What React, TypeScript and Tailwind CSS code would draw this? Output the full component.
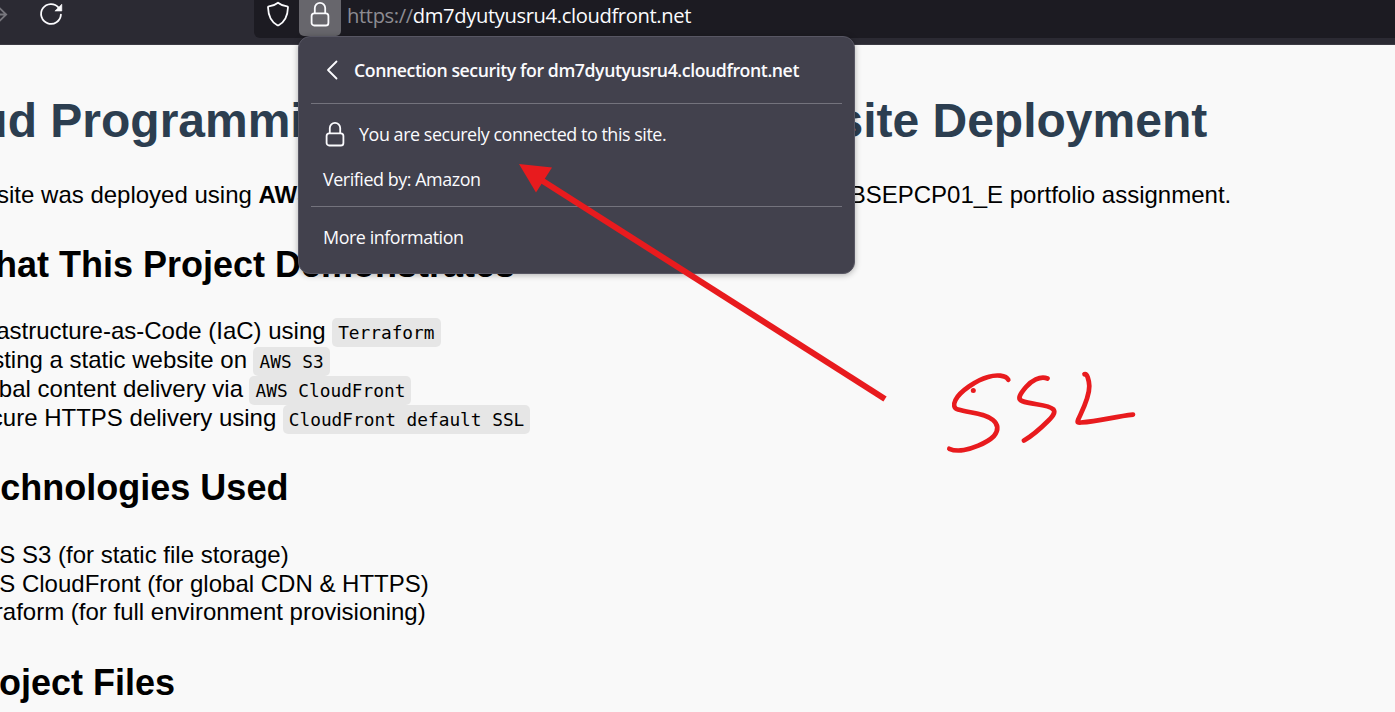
import React from "react";

function Lock({ className = "" }: { className?: string }) {
  return (
    <svg className={className} width="20" height="26" viewBox="0 0 20 26" fill="none" stroke="#fbfbfe" strokeWidth="1.8">
      <rect x="1.6" y="12.4" width="16.8" height="12.100" rx="2.600" />
      <path d="M4.800 12.400V7a5.200 5.200 0 0 1 10.400 0v5.400" />
    </svg>
  );
}

function Code({ children }: { children: React.ReactNode }) {
  return (
    <code className="relative top-[2px] ml-[6.5px] flex h-[29px] items-center rounded-[5px] bg-[#e6e6e6] px-[6px] pt-px font-['DejaVu_Sans_Mono',monospace] text-[17.8px] leading-[28px]">
      {children}
    </code>
  );
}

function Toolbar() {
  return (
    <header className="flex h-[45px] items-start border-b border-[#3c3b44] bg-[#2b2a33]">
      <div className="flex w-[254px] shrink-0">
        <svg width="80" height="30" viewBox="0 0 80 30" fill="none">
          <path d="M-8 14.5H6M-1 7.5l7.2 7L-1 21.5" stroke="#77767d" strokeWidth="1.8" />
          <path d="M58.600 7.600A9.900 9.900 0 1 0 60.900 14.600" stroke="#fbfbfe" strokeWidth="1.8" strokeLinecap="round" />
          <path d="M61.800 4.200v6.800h-6.900z" fill="#fbfbfe" stroke="#fbfbfe" strokeWidth=".6" strokeLinejoin="round" />
        </svg>
      </div>
      <div className="flex h-[38px] grow items-start overflow-hidden rounded-bl-[6px] bg-[#1c1b22]">
        <svg className="ml-[12px] mt-px shrink-0" width="24" height="26" viewBox="0 0 24 26" fill="none">
          <path d="M12 1.700c2.600 2.100 5.600 3.300 9.100 3.600.6.1.9.5.9 1C21.700 14.500 18.500 21.200 12.700 24.200q-.7.3-1.400 0C5.500 21.200 2.300 14.500 2 6.300c0-.5.3-.9.9-1C6.400 5 9.400 3.800 12 1.700z" stroke="#fbfbfe" strokeWidth="1.8" strokeLinejoin="round" />
        </svg>
        <div className="ml-[9px] flex h-[36px] w-[42px] shrink-0 justify-center rounded-b-[5px] bg-[#67666c] pt-px">
          <Lock />
        </div>
        <p className="ml-[6px] whitespace-nowrap font-['Open_Sans',sans-serif] text-[20.2px] leading-[30px] tracking-[-0.38px] text-[#fbfbfe]">
          <span className="text-[#8d8c92]">https://</span>dm7dyutyusru4.cloudfront.net
        </p>
      </div>
    </header>
  );
}

function SecurityPanel() {
  return (
    <section className="absolute left-[298px] top-[36px] flex h-[238px] w-[557px] flex-col rounded-[12px] border border-[#575663] bg-[#42414d] px-[12px] font-['Open_Sans',sans-serif] text-[17.9px] tracking-[-0.44px] text-[#fbfbfe] shadow-[0_1px_6px_rgba(0,0,0,0.3)]">
      <div className="flex h-[66px] items-center whitespace-nowrap pl-[14px]">
        <svg width="14" height="20" viewBox="0 0 14 20" fill="none">
          <path d="M11.500 1.500 3 10l8.500 8.500" stroke="#fbfbfe" strokeWidth="1.800" strokeLinecap="round" strokeLinejoin="round" />
        </svg>
        <h2 className="ml-[15px] text-[17.7px] font-semibold tracking-[-0.42px]">Connection security for dm7dyutyusru4.cloudfront.net</h2>
      </div>
      <div className="h-px shrink-0 bg-[#74737d]" />
      <div className="h-[102px] pl-[12px]">
        <div className="flex h-[60px] items-center pl-[2px]">
          <Lock />
          <p className="ml-[14px] whitespace-nowrap">You are securely connected to this site.</p>
        </div>
        <p className="leading-[31px]">Verified by: Amazon</p>
      </div>
      <div className="h-px shrink-0 bg-[#74737d]" />
      <p className="pl-[12px] pt-[15px] leading-[31px]">More information</p>
    </section>
  );
}

function Article() {
  return (
    <main className="h-[667px] overflow-hidden whitespace-nowrap bg-[#f9f9f9] pt-[48px] font-['Liberation_Sans',Arial,sans-serif] text-[24px] leading-[29px] text-black">
      <h1 className="-ml-[99px] flex h-[56px] text-[48px] font-bold leading-[56px] text-[#2c3e50]">
        <span className="w-[835px]">Cloud Programming</span>
        <span>Website Deployment</span>
      </h1>
      <p className="-ml-[99px] mt-[32px] flex h-[28px] leading-[28px]">
        <span className="w-[918px] whitespace-pre">This website was deployed using <b>AWS</b></span>
        <span>DLBSEPCP01_E portfolio assignment.</span>
      </p>
      <h2 className="-ml-[39px] mt-[35px] text-[36px] font-bold leading-[42px]">What This Project Demonstrates</h2>
      <ul className="-ml-[38.500px] mt-[30px]">
        <li className="flex">Infrastructure-as-Code (IaC) using<Code>Terraform</Code></li>
        <li className="flex">Hosting a static website on<Code>AWS S3</Code></li>
        <li className="flex">Global content delivery via<Code>AWS CloudFront</Code></li>
        <li className="flex">Secure HTTPS delivery using<Code>CloudFront default SSL</Code></li>
      </ul>
      <h2 className="-ml-[39px] mt-[35px] text-[36px] font-bold leading-[42px]">Technologies Used</h2>
      <ul className="-ml-[38.500px] mt-[32px] leading-[28.67px]">
        <li>AWS S3 (for static file storage)</li>
        <li>AWS CloudFront (for global CDN &amp; HTTPS)</li>
        <li>Terraform (for full environment provisioning)</li>
      </ul>
      <h2 className="-ml-[39px] mt-[35px] text-[36px] font-bold leading-[42px]">Project Files</h2>
    </main>
  );
}

function Annotations() {
  return (
    <svg className="pointer-events-none absolute left-0 top-0" width="1395" height="712" viewBox="0 0 1395 712" fill="none">
      <path d="M885 399 542 180.500" stroke="#e81b1e" strokeWidth="6" />
      <path d="M519 164l33 3.500-16 25z" fill="#e81b1e" />
      <g stroke="#e81b1e" strokeWidth="4.700" strokeLinecap="round" strokeLinejoin="round">
        <path d="M1008.300 379.800C1006 375 996 374.500 988 377C977 380 960 391 955.500 400C953 405 954 408.500 958 409.500C970 413 985 413 993 420C998 424 999 430 994 436C986 444 970 449 964 450C958 451 952 450 949.300 448.800" />
        <path d="M1047.500 378.500C1040 375.500 1031 381 1026 387C1020 394 1017 399 1022 401C1032 405 1048 404 1053.500 409.500C1056 413 1052 417 1048 421C1039 430 1030 437 1024 440.500" />
        <path d="M1084.500 374.200C1087 373 1089 380 1089.300 386C1089.500 398 1081 413 1078 420C1077 422.500 1078 422.700 1081 422.500C1100 421.500 1114 416.500 1133 414.600" />
      </g>
      <circle cx="973.300" cy="390.500" r="2.500" fill="#e81b1e" />
    </svg>
  );
}

export default function App() {
  return (
    <div className="relative h-[712px] w-[1395px] overflow-hidden bg-[#f9f9f9]">
      <Toolbar />
      <Article />
      <SecurityPanel />
      <Annotations />
    </div>
  );
}
